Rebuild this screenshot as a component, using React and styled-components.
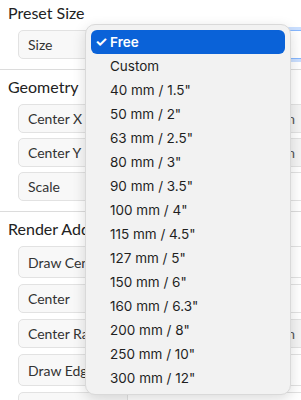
import React from "react";
import styled, { createGlobalStyle } from "styled-components";

const GlobalStyle = createGlobalStyle`
  html, body {
    margin: 0;
    padding: 0;
    background: #ffffff;
    overflow: hidden;
  }
  body {
    font-family: "Lato", "Noto Sans", sans-serif;
    color: #212529;
  }
`;

const Page = styled.div`
  position: relative;
  width: 301px;
  height: 400px;
  overflow: hidden;
`;

const Panel = styled.div`
  width: 308px;
`;

const Section = styled.section`
  padding: 7px 0 10px 8px;
  border-bottom: 1px solid #dcdcdc;

  &:first-child {
    padding-top: 3px;
  }
`;

const Heading = styled.h3`
  margin: 0 0 7px;
  font-size: 16px;
  line-height: 20px;
  font-weight: 400;
  color: #222;
`;

const Rows = styled.div`
  display: flex;
  flex-direction: column;
  gap: ${({ $gap }) => $gap}px;
  padding-left: 10px;
`;

const Group = styled.div`
  display: flex;
  height: ${({ $tall }) => ($tall ? 32 : 29)}px;
`;

const Label = styled.div`
  flex: 0 0 110px;
  box-sizing: border-box;
  display: flex;
  align-items: center;
  padding-left: 9px;
  font-size: 14px;
  color: #333;
  background: #f8f8f8;
  border: 1px solid #e2e2e2;
  border-radius: 5px 0 0 5px;
  white-space: nowrap;
  overflow: hidden;
`;

const Field = styled.div`
  flex: 1;
  box-sizing: border-box;
  display: flex;
  align-items: center;
  padding-left: 12px;
  background: #fff;
  border: 1px solid ${({ $focus }) => ($focus ? "#86b7fe" : "#e2e2e2")};
  border-left: none;
  box-shadow: ${({ $focus }) =>
    $focus ? "0 0 0 3px rgba(13, 110, 253, 0.22)" : "none"};
  font-size: 14px;
`;

const Unit = styled.div`
  flex: 0 0 44px;
  box-sizing: border-box;
  display: flex;
  align-items: center;
  padding-left: 7px;
  background: #f4f4f4;
  border: 1px solid #e2e2e2;
  font-size: 14px;
  color: #555;
`;

const Dot = styled.span`
  width: 14px;
  height: 14px;
  margin-left: 10px;
  margin-top: 10px;
  border-radius: 50%;
  background: #2f6fe0;
`;

const Menu = styled.ul`
  position: absolute;
  left: 85px;
  top: 24px;
  width: 206px;
  box-sizing: border-box;
  margin: 0;
  padding: 5px 5px 4px;
  list-style: none;
  background: #f2f2f2;
  border: 1px solid #d9d9d9;
  border-radius: 10px;
  box-shadow: 0 4px 14px rgba(0, 0, 0, 0.14);
  font-family: "Inter", "Liberation Sans", sans-serif;
`;

const Item = styled.li`
  position: relative;
  height: 24px;
  line-height: 24px;
  padding-left: 19px;
  border-radius: 6px;
  font-size: 13.5px;
  color: ${({ $active }) => ($active ? "#fff" : "#1f1f1f")};
  background: ${({ $active }) => ($active ? "#0a62d8" : "transparent")};
  font-weight: ${({ $active }) => ($active ? 600 : 400)};
`;

const Check = styled.span`
  position: absolute;
  left: 4px;
  font-size: 14px;
  font-weight: 700;
`;

const sizes = [
  "Free",
  "Custom",
  "40 mm / 1.5\"",
  "50 mm / 2\"",
  "63 mm / 2.5\"",
  "80 mm / 3\"",
  "90 mm / 3.5\"",
  "100 mm / 4\"",
  "115 mm / 4.5\"",
  "127 mm / 5\"",
  "150 mm / 6\"",
  "160 mm / 6.3\"",
  "200 mm / 8\"",
  "250 mm / 10\"",
  "300 mm / 12\"",
];

const App = () => {
  return (
    <Page>
      <GlobalStyle />
      <Panel>
        <Section>
          <Heading>Preset Size</Heading>
          <Rows $gap={5}>
            <Group>
              <Label>Size</Label>
              <Field $focus>Free</Field>
            </Group>
          </Rows>
        </Section>
        <Section>
          <Heading>Geometry</Heading>
          <Rows $gap={5}>
            <Group>
              <Label>Center X</Label>
              <Field>0</Field>
              <Unit>mm</Unit>
            </Group>
            <Group>
              <Label>Center Y</Label>
              <Field>0</Field>
              <Unit>mm</Unit>
            </Group>
            <Group>
              <Label>Scale</Label>
              <Field>1</Field>
            </Group>
          </Rows>
        </Section>
        <Section>
          <Heading>Render Additions</Heading>
          <Rows $gap={6}>
            <Group $tall>
              <Label>Draw Center</Label>
              <Field />
            </Group>
            <Group>
              <Label>Center</Label>
              <Field>Cross</Field>
            </Group>
            <Group>
              <Label>Center Radius</Label>
              <Field>2</Field>
              <Unit>mm</Unit>
            </Group>
            <Group $tall>
              <Label>Draw Edge</Label>
              <Field />
            </Group>
            <Group $tall>
              <Label>Edge Color</Label>
              <Field>
                <Dot />
              </Field>
            </Group>
          </Rows>
        </Section>
      </Panel>
      <Menu>
        {sizes.map((s, i) => (
          <Item key={s} $active={i === 0}>
            {i === 0 && <Check>✓</Check>}
            {s}
          </Item>
        ))}
      </Menu>
    </Page>
  );
};

export default App;
